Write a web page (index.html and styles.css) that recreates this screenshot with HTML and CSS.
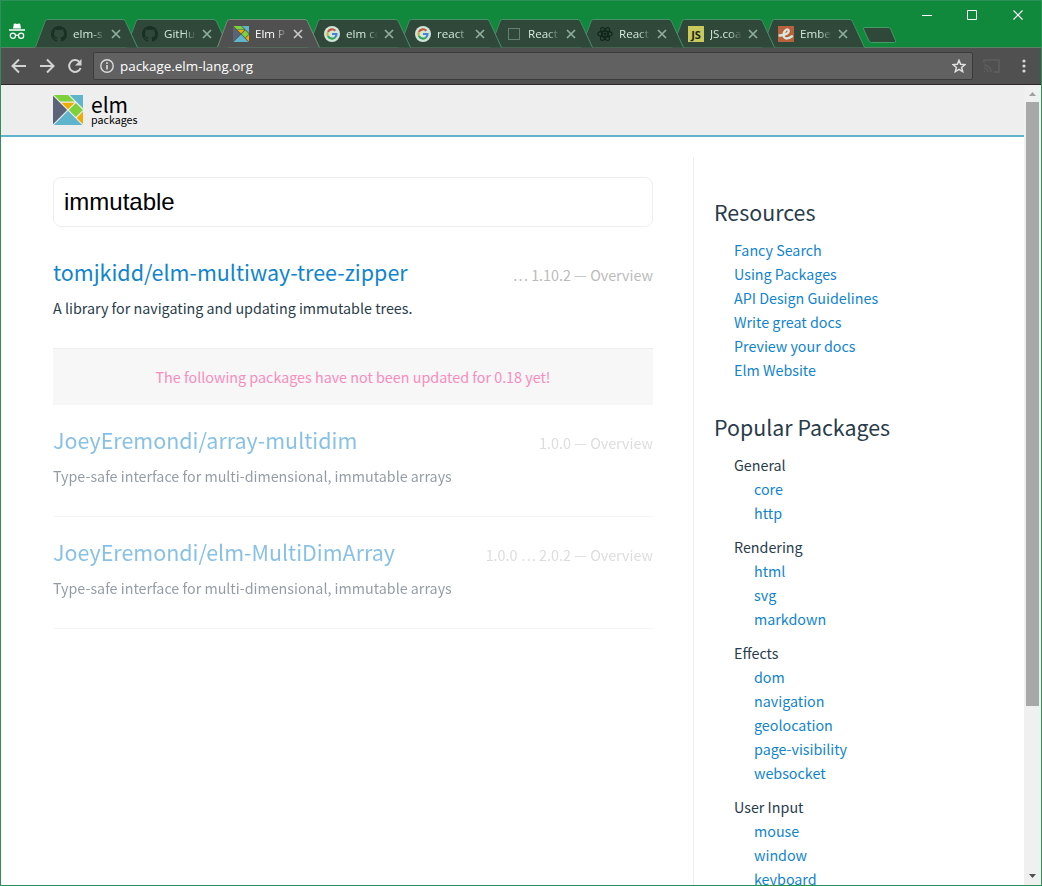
FILE: index.html
```
<!DOCTYPE html>
<html lang="en">
<head>
<meta charset="utf-8">
<title>Elm Packages</title>
<link rel="stylesheet" href="styles.css">
</head>
<body>
<svg class="defs" width="0" height="0">
  <symbol id="shape" viewBox="0 0 104 29">
    <path class="fill" d="M0 28.5 L9.5 3 Q10.5 .5 12.500 .5 H87.500 Q90 .5 91 3 L102.500 28.500 Z"/>
    <path class="edge" d="M.5 28 L10 2.500 Q10.500 .5 12.500 .5 H88 Q89.500 .5 90.500 2.500 L102.500 28.500"/>
  </symbol>
  <symbol id="x" viewBox="0 0 10 10"><path d="M1 1 L9 9 M9 1 L1 9" fill="none" stroke="currentColor" stroke-width="1.700"/></symbol>
  <symbol id="github" viewBox="0 0 16 16"><path fill="#1b3024" d="M8 0C3.580 0 0 3.580 0 8c0 3.540 2.290 6.530 5.470 7.590.4.070.55-.17.55-.38 0-.19-.01-.82-.01-1.490-2.010.37-2.530-.49-2.690-.94-.09-.23-.48-.94-.82-1.130-.28-.15-.68-.52-.01-.53.63-.01 1.080.58 1.230.82.72 1.210 1.870.87 2.330.66.070-.52.28-.87.51-1.070-1.780-.2-3.640-.89-3.640-3.950 0-.87.31-1.590.82-2.150-.08-.2-.36-1.020.08-2.120 0 0 .67-.21 2.200.82.64-.18 1.320-.27 2-.27s1.360.09 2 .27c1.530-1.040 2.200-.82 2.200-.82.44 1.100.16 1.920.08 2.120.51.56.82 1.270.82 2.150 0 3.070-1.870 3.750-3.650 3.950.29.25.54.73.54 1.480 0 1.070-.01 1.930-.01 2.200 0 .21.15.46.55.38A8.010 8.010 0 0 0 16 8c0-4.420-3.580-8-8-8z"/></symbol>
  <symbol id="elm" viewBox="0 0 323.300 323.300">
    <path fill="#f0ad00" d="M161.600 152.800 L231.500 82.900 H91.800Z M255.500 246.700 L323.300 314.400 V178.900Z"/>
    <path fill="#7fd13b" d="M8.900 0 L79.200 70.400 H232.200 L161.800 0Z M246.800 85.200 L323 161.400 L246.500 237.900 L170.400 161.700Z"/>
    <path fill="#60b5cc" d="M323.300 143.700 V0 H179.600Z M161.600 170.500 L8.900 323.300 H314.400Z"/>
    <path fill="#5a6378" d="M152.800 161.600 L0 8.900 V314.400Z"/>
  </symbol>
  <symbol id="google" viewBox="0 0 16 16">
    <circle cx="8" cy="8" r="8" fill="#d3e4d9"/>
    <g fill="none" stroke-width="2.100">
      <path stroke="#c0563c" d="M11.300 4.700 A4.600 4.600 0 0 0 3.900 5.900"/>
      <path stroke="#cfae3a" d="M3.900 5.900 A4.600 4.600 0 0 0 3.900 10.100"/>
      <path stroke="#2fa556" d="M3.900 10.100 A4.600 4.600 0 0 0 11 11.500"/>
      <path stroke="#4385cf" d="M11 11.500 A4.600 4.600 0 0 0 12.500 8 H8"/>
    </g>
  </symbol>
  <symbol id="blank" viewBox="0 0 16 16"><rect x="2.500" y="2.500" width="11" height="11" fill="none" stroke="#62836c"/></symbol>
  <symbol id="react" viewBox="0 0 16 16">
    <g fill="none" stroke="#10261a" stroke-width="1.200">
      <ellipse cx="8" cy="8" rx="7.200" ry="2.800"/>
      <ellipse cx="8" cy="8" rx="7.200" ry="2.800" transform="rotate(60 8 8)"/>
      <ellipse cx="8" cy="8" rx="7.200" ry="2.800" transform="rotate(120 8 8)"/>
    </g><circle cx="8" cy="8" r="1.500" fill="#10261a"/>
  </symbol>
  <symbol id="ember" viewBox="0 0 16 16">
    <rect width="16" height="16" fill="#b9603c"/>
    <path d="M1.500 9.500 Q4 9.500 6.500 8.700 Q11.500 7 10.600 4.300 Q9.500 2.200 7.200 4.500 Q4.500 8 6 11 Q8 14.300 14 10.300" fill="none" stroke="#d8e8dc" stroke-width="2.300" stroke-linecap="round"/>
  </symbol>
</svg>
<div class="window">
  <div class="tabstrip">
    <svg class="incognito" width="18" height="18" viewBox="0 0 18 18">
      <path fill="#fff" d="M5 5.500 L5.800 1 Q6 .4 7 .5 L9 1 L11 .5 Q12 .4 12.200 1 L13 5.500Z M1 6.200 H17 V7.700 H1Z"/>
      <g fill="none" stroke="#fff" stroke-width="1.200"><circle cx="4.900" cy="12.800" r="2.600"/><circle cx="13.100" cy="12.800" r="2.600"/><path d="M7.500 12.600 Q9 11.600 10.500 12.600"/></g>
    </svg>
    <div class="tabs">
      <div class="tab t1"><svg class="shape"><use href="#shape"/></svg><svg class="icon"><use href="#github"/></svg><span class="title">elm-s</span><svg class="x"><use href="#x"/></svg></div>
      <div class="tab t2"><svg class="shape"><use href="#shape"/></svg><svg class="icon"><use href="#github"/></svg><span class="title">GitHu</span><svg class="x"><use href="#x"/></svg></div>
      <div class="tab active"><svg class="shape"><use href="#shape"/></svg><svg class="icon"><use href="#elm"/></svg><span class="title">Elm P</span><svg class="x"><use href="#x"/></svg></div>
      <div class="tab t4"><svg class="shape"><use href="#shape"/></svg><svg class="icon"><use href="#google"/></svg><span class="title">elm co</span><svg class="x"><use href="#x"/></svg></div>
      <div class="tab t5"><svg class="shape"><use href="#shape"/></svg><svg class="icon"><use href="#google"/></svg><span class="title">react</span><svg class="x"><use href="#x"/></svg></div>
      <div class="tab t6"><svg class="shape"><use href="#shape"/></svg><svg class="icon"><use href="#blank"/></svg><span class="title">React</span><svg class="x"><use href="#x"/></svg></div>
      <div class="tab t7"><svg class="shape"><use href="#shape"/></svg><svg class="icon"><use href="#react"/></svg><span class="title">React</span><svg class="x"><use href="#x"/></svg></div>
      <div class="tab t8"><svg class="shape"><use href="#shape"/></svg><span class="icon js">JS</span><span class="title">JS.coa</span><svg class="x"><use href="#x"/></svg></div>
      <div class="tab t9"><svg class="shape"><use href="#shape"/></svg><svg class="icon"><use href="#ember"/></svg><span class="title">Embe</span><svg class="x"><use href="#x"/></svg></div>
    </div>
    <svg class="newtab" width="36" height="18" viewBox="0 0 36 18"><path d="M3 1.500 H26 Q28 1.500 28.700 3 L33.500 14.500 Q34 16.500 32.500 16.500 H9.500 Q7.500 16.500 7 15 L1.500 3 Q1 1.500 3 1.500Z" fill="#2f4839" stroke="#429c64"/></svg>
    <svg class="controls" width="104" height="14" viewBox="0 0 104 14">
      <path d="M0 7.500 H10 M45.500 2.500 H54.500 V11.500 H45.500Z" fill="none" stroke="#fff"/>
      <path d="M91.500 2.500 L100.500 11.500 M100.500 2.500 L91.500 11.500" stroke="#fff" stroke-width="1.200"/>
    </svg>
  </div>
  <div class="toolbar">
    <svg class="nav" width="74" height="16" viewBox="0 0 74 16">
      <g fill="none" stroke="#d3d3d3" stroke-width="2">
        <path d="M15 8 H2 M8 1.500 L1.500 8 L8 14.500"/>
        <path d="M29 8 H42 M36 1.500 L42.500 8 L36 14.500"/>
        <path d="M68.200 3.800 A5.900 5.900 0 1 0 69.600 10"/>
      </g><path fill="#d3d3d3" d="M70.500 1 V7.500 H64Z"/>
    </svg>
    <div class="omnibox">
      <svg width="14" height="14" viewBox="0 0 14 14"><circle cx="7" cy="7" r="6.200" fill="none" stroke="#dcdcdc" stroke-width="1.400"/><path stroke="#dcdcdc" stroke-width="1.600" d="M7 6 V10.500 M7 3.300 V4.900"/></svg>
      <span class="url">package.elm-lang.org</span>
      <svg width="14" height="14" viewBox="0 0 14 14"><path d="M7 1.300 L8.600 5.300 L12.900 5.600 L9.600 8.400 L10.700 12.600 L7 10.300 L3.300 12.600 L4.400 8.400 L1.100 5.600 L5.400 5.300Z" fill="none" stroke="#e0e0e0" stroke-width="1.500"/></svg>
    </div>
    <svg class="cast" width="17" height="14" viewBox="0 0 17 14"><path d="M1 3.500 V1 H16 V13 H10.500 M1 12.500 H2 M1 9 A4 4 0 0 1 5 13 M1 6 A7 7 0 0 1 8 13" fill="none" stroke="#5f5f5f" stroke-width="1.500"/></svg>
    <svg class="menu" width="4" height="14" viewBox="0 0 4 14"><g fill="#d8d8d8"><circle cx="2" cy="2" r="1.600"/><circle cx="2" cy="7" r="1.600"/><circle cx="2" cy="12" r="1.600"/></g></svg>
  </div>
  <div class="viewport">
    <div class="page">
      <header class="header">
        <svg width="30" height="30"><use href="#elm"/></svg>
        <div class="brand"><span class="brand-name">elm</span><span class="brand-sub">packages</span></div>
      </header>
      <div class="columns">
        <main class="results">
          <input class="search" type="text" value="immutable">
          <article class="package">
            <div class="row"><a class="name">tomjkidd/elm-multiway-tree-zipper</a><span class="versions">… 1.10.2 — Overview</span></div>
            <p class="summary">A library for navigating and updating immutable trees.</p>
          </article>
          <div class="notice">The following packages have not been updated for 0.18 yet!</div>
          <article class="package old">
            <div class="row"><a class="name">JoeyEremondi/array-multidim</a><span class="versions">1.0.0 — Overview</span></div>
            <p class="summary">Type-safe interface for multi-dimensional, immutable arrays</p>
          </article>
          <article class="package old">
            <div class="row"><a class="name">JoeyEremondi/elm-MultiDimArray</a><span class="versions">1.0.0 … 2.0.2 — Overview</span></div>
            <p class="summary">Type-safe interface for multi-dimensional, immutable arrays</p>
          </article>
        </main>
        <aside class="sidebar">
          <h2>Resources</h2>
          <ul><li><a>Fancy Search</a></li><li><a>Using Packages</a></li><li><a>API Design Guidelines</a></li><li><a>Write great docs</a></li><li><a>Preview your docs</a></li><li><a>Elm Website</a></li></ul>
          <h2>Popular Packages</h2>
          <ul class="groups">
            <li>General<ul><li><a>core</a></li><li><a>http</a></li></ul></li>
            <li>Rendering<ul><li><a>html</a></li><li><a>svg</a></li><li><a>markdown</a></li></ul></li>
            <li>Effects<ul><li><a>dom</a></li><li><a>navigation</a></li><li><a>geolocation</a></li><li><a>page-visibility</a></li><li><a>websocket</a></li></ul></li>
            <li>User Input<ul><li><a>mouse</a></li><li><a>window</a></li><li><a>keyboard</a></li></ul></li>
          </ul>
        </aside>
      </div>
    </div>
    <div class="scrollbar">
      <svg width="17" height="17"><path fill="#a0a0a0" d="M5 11 L8.500 7 L12 11Z"/></svg>
      <div class="thumb"></div>
      <svg width="17" height="17"><path fill="#505050" d="M5 6 L8.500 10 L12 6Z"/></svg>
    </div>
  </div>
</div>
</body>
</html>
```
FILE: styles.css
```
* { box-sizing: border-box; }
body { margin: 0; overflow: hidden; font-family: "Noto Sans CJK JP", sans-serif; color: #293c4b; }
.defs { position: absolute; }
.window { display: flex; flex-direction: column; width: 1042px; height: 886px; border: 1px solid #2c9157; background: #fff; }
.tabstrip { display: flex; align-items: flex-start; height: 47px; flex: none; background: #11893c; border-bottom: 1px solid #5f8068; }
.incognito { margin: 22px 0 0 7px; }
.tabs { display: flex; margin: 18px 0 0 9px; z-index: 1; }
.tab { display: flex; align-items: center; position: relative; isolation: isolate; width: 91px; height: 29px; padding-left: 16px; color: #8fae9b; }
.shape { position: absolute; left: 0; top: 0; width: 104px; height: 29px; z-index: -1; --fill: #2f4839; }
.fill { fill: var(--fill); }
.edge { fill: none; stroke: var(--edge, #47906a); }
.t1 { z-index: 8; } .t2 { z-index: 7; } .active { z-index: 10; }
.t4 { z-index: 6; } .t5 { z-index: 5; } .t6 { z-index: 4; } .t7 { z-index: 3; } .t8 { z-index: 2; width: 90px; } .t9 { z-index: 1; }
.active { color: #c8c8c8; }
.active .shape { --fill: #505050; --edge: #6f8f7b; }
.icon { width: 16px; height: 16px; flex: none; }
.js { background: #cbc95c; color: #17281a; font: bold 11px/17px "Open Sans", sans-serif; text-align: center; }
.title { width: 32px; margin-left: 6px; overflow: hidden; white-space: nowrap; font: 11.600px/20px "Open Sans", sans-serif; color: #d5e8db; -webkit-mask-image: linear-gradient(90deg, #000 60%, transparent); mask-image: linear-gradient(90deg, #000 60%, transparent); }
.active .title { color: #fff; }
.x { width: 10px; height: 10px; margin-left: 6px; flex: none; }
.newtab { margin: 25px 0 0 9px; }
.controls { margin: 7px 15px 0 auto; }
.toolbar { display: flex; align-items: center; flex: none; height: 37px; background: #505050; border-bottom: 1px solid #2d262d; }
.nav { margin-left: 10px; }
.omnibox { display: flex; align-items: center; width: 880px; height: 28px; margin-left: 8px; padding: 0 6px; border: 1px solid #3b3b3b; border-radius: 2px; background: #616161; }
.url { flex: 1; margin-left: 6px; font: 13.400px/20px "Open Sans", sans-serif; color: #fff; }
.cast { margin-left: 9.500px; }
.menu { margin-left: 22px; }
.viewport { display: flex; flex: 1; min-height: 0; }
.page { flex: 1; overflow: hidden; }
.header { display: flex; align-items: center; height: 52px; padding-left: 52px; background: #eee; border-bottom: 2px solid #60b5cc; color: #000; }
.brand { display: flex; flex-direction: column; margin: 0 0 2px 8px; }
.brand-name { font-size: 21px; line-height: 22px; }
.brand-sub { font-size: 10.700px; line-height: 10px; }
.columns { display: flex; padding: 20px 0 0 52px; }
.results { width: 600px; padding-top: 20px; }
.search { display: block; width: 600px; height: 50px; padding: 0 10px; border: 1px solid #eee; border-radius: 8px; outline: none; font: 24px "Liberation Sans", Arial, sans-serif; color: #000; margin-bottom: 10px; }
.package { height: 112px; padding-top: 19px; border-bottom: 1px solid #eee; }
.row { display: flex; justify-content: space-between; align-items: baseline; height: 32px; }
.name { font-size: 21.470px; line-height: 32px; color: #1184ce; }
.versions { font-size: 14.330px; color: #bbb; line-height: 24px; }
.summary { margin: 8px 0 0; font-size: 14.300px; line-height: 24px; }
.old { opacity: .5; }
.notice { height: 56px; padding: 16px; text-align: center; font-size: 14.330px; line-height: 24px; background: #f7f7f7; color: #f98cbf; }
.sidebar { margin-left: 40px; padding: 39px 0 0 20px; border-left: 1px solid #eee; height: 729px; font-size: 14.300px; line-height: 24px; }
h2 { margin: 0 0 10px; font-size: 21.400px; font-weight: 400; line-height: 32px; }
ul { margin: 0; padding: 0 0 0 20px; list-style: none; }
.sidebar > ul { margin-bottom: 29px; }
.sidebar a { color: #1184ce; }
.groups > li { margin-bottom: 10px; }
.scrollbar { display: flex; flex-direction: column; width: 17px; background: #f0f0f0; }
.thumb { width: 13px; height: 604px; margin: 0 2px auto; background: #a8a8a8; }
```
